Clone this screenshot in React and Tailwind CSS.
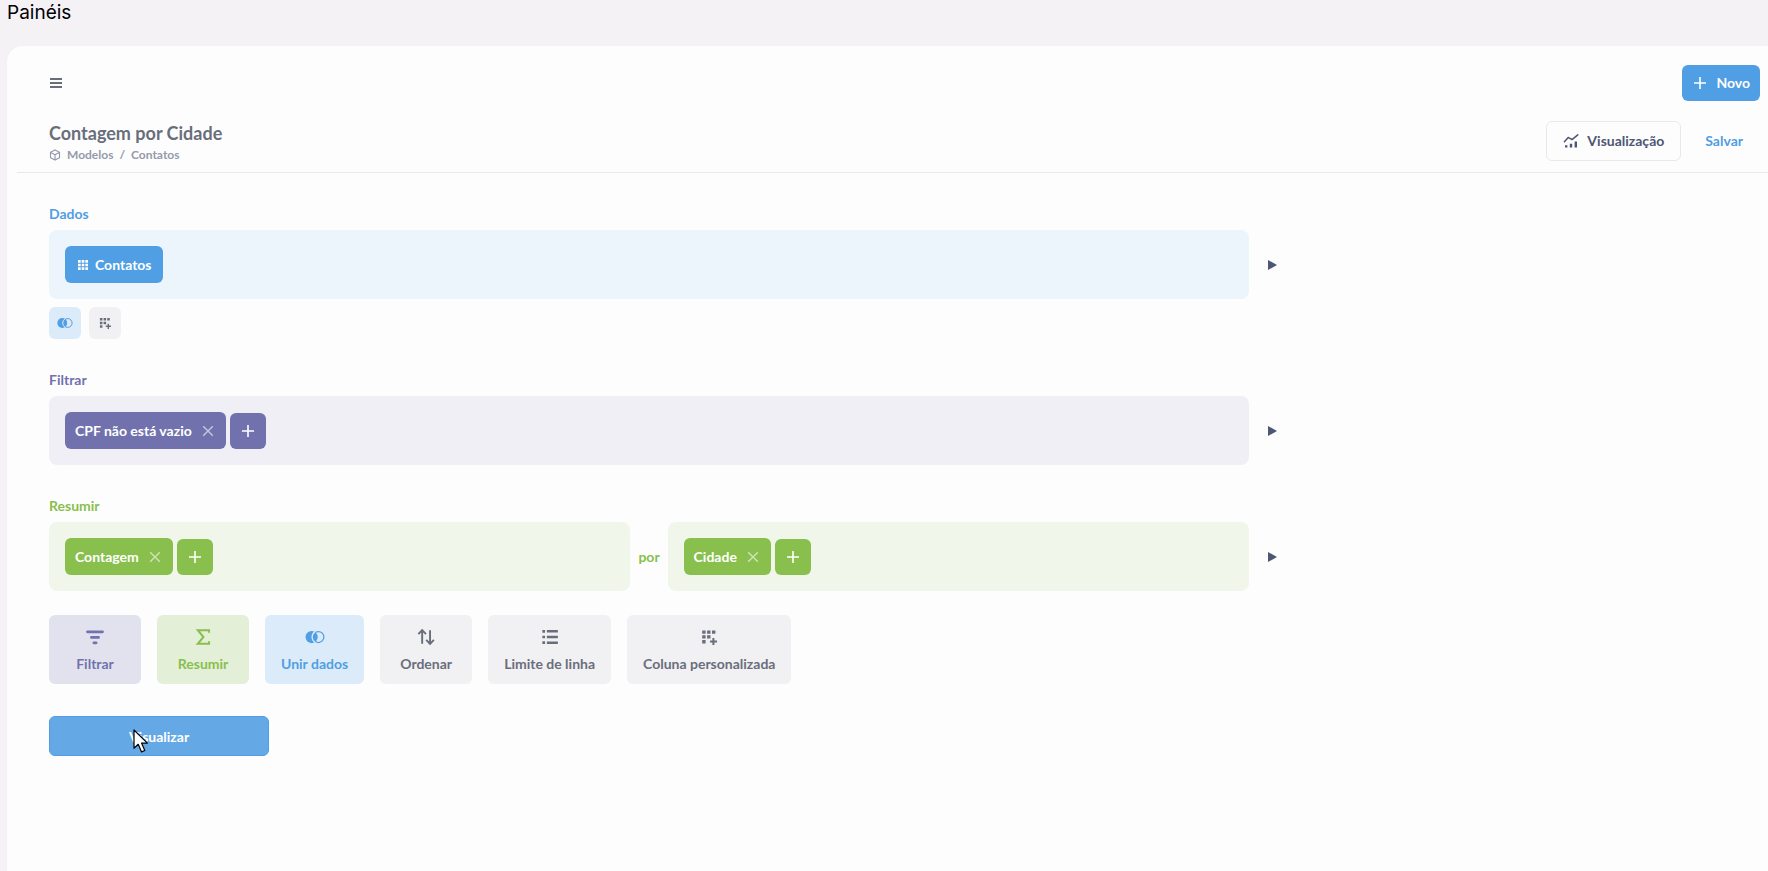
// App.jsx
import React from 'react';

function Icon({ size = 16, className = '', children }) {
  return (
    <svg
      width={size}
      height={size}
      viewBox="0 0 16 16"
      fill="currentColor"
      aria-hidden="true"
      className={`shrink-0 ${className}`}
    >
      {children}
    </svg>
  );
}

const MenuIcon = () => (
  <Icon size={16}>
    <path d="M2 3h12v2H2zM2 7h12v2H2zM2 11h12v2H2z" />
  </Icon>
);

const ModelIcon = () => (
  <Icon size={12}>
    <path
      d="M8 1.2l6 3.2v7.2l-6 3.2-6-3.2V4.4zM2.3 4.6L8 7.8l5.7-3.2M8 7.8v6.6"
      fill="none"
      stroke="currentColor"
      strokeWidth="1.5"
      strokeLinejoin="round"
    />
  </Icon>
);

const PlusIcon = ({ size = 16 }) => (
  <Icon size={size}>
    <path d="M7.2 2h1.6v5.2H14v1.6H8.8V14H7.2V8.8H2V7.2h5.2z" />
  </Icon>
);

const CloseIcon = () => (
  <Icon size={16} className="opacity-60">
    <path d="M3.2 3.2l9.6 9.6M12.8 3.2l-9.6 9.6" fill="none" stroke="currentColor" strokeWidth="1.4" />
  </Icon>
);

const InsightIcon = () => (
  <Icon size={16}>
    <path
      d="M1.4 8.8l3.8-4.4 3.8 2.2L14.8 1.8"
      fill="none"
      stroke="currentColor"
      strokeWidth="1.5"
      strokeLinejoin="round"
      strokeLinecap="round"
    />
    <path d="M2 12.2h2.4v2.4H2zM6.8 10.8h2.4v3.8H6.8zM11.6 8.6H14v6h-2.4z" />
  </Icon>
);

const TableIcon = () => (
  <Icon size={12}>
    <path d="M1.3 1.3h3.6v3.6H1.3zM6.2 1.3h3.6v3.6H6.2zM11.1 1.3h3.6v3.6h-3.6zM1.3 6.2h3.6v3.6H1.3zM6.2 6.2h3.6v3.6H6.2zM11.1 6.2h3.6v3.6h-3.6zM1.3 11.1h3.6v3.6H1.3zM6.2 11.1h3.6v3.6H6.2zM11.1 11.1h3.6v3.6h-3.6z" />
  </Icon>
);

const JoinIcon = ({ size = 16 }) => (
  <Icon size={size}>
    <circle cx="5.3" cy="8" r="4.9" />
    <circle cx="10.7" cy="8" r="4.4" fill="none" stroke="currentColor" strokeWidth="1" />
    <path d="M7.9 3.9a4.9 4.9 0 0 0 0 8.2" fill="none" stroke="#dbebf9" strokeWidth="1" />
  </Icon>
);

const ColumnIcon = ({ size = 16 }) => (
  <Icon size={size}>
    <path d="M1.2 1.4h3.4v3.4H1.2zM6.1 1.4h3.4v3.4H6.1zM11 1.4h3.4v3.4H11zM1.2 6.2h3.4v3.4H1.2zM6.1 6.2h3.4v3.4H6.1zM1.2 11h3.4v3.4H1.2z" />
    <path d="M11.4 9h2v2.4H16v2h-2.6V16h-2v-2.6H9v-2h2.4z" />
  </Icon>
);

const FilterIcon = () => (
  <Icon size={18}>
    <path
      d="M1.3 3.4h13.4M4.8 8.4h6.4M7 13.2h2"
      fill="none"
      stroke="currentColor"
      strokeWidth="2.4"
      strokeLinecap="round"
    />
  </Icon>
);

const SumIcon = () => (
  <Icon size={18}>
    <path
      d="M13.4 4.2V2H3.4l5 6-5 6h10v-2.2"
      fill="none"
      stroke="currentColor"
      strokeWidth="1.8"
    />
  </Icon>
);

const SortIcon = () => (
  <Icon size={18}>
    <path
      d="M4.6 14V2M1.2 5.4l3.4-3.6L8 5.4M11.6 2v12M8.2 10.6l3.4 3.6 3.4-3.6"
      fill="none"
      stroke="currentColor"
      strokeWidth="1.7"
    />
  </Icon>
);

const ListIcon = () => (
  <Icon size={18}>
    <path d="M1.2 1.8h2.4v2.4H1.2zM5.2 1.8H15v2.2H5.2zM1.2 6.8h2.4v2.4H1.2zM5.2 6.9H15v2.2H5.2zM1.2 11.8h2.4v2.4H1.2zM5.2 12H15v2.2H5.2z" />
  </Icon>
);

const PlayIcon = () => (
  <Icon size={10}>
    <path d="M1.6 0v16L16 8z" />
  </Icon>
);

function Chip({ label, color }) {
  return (
    <div className={`flex h-[37px] items-center gap-2 rounded-md px-[10px] text-white ${color}`}>
      <button type="button">{label}</button>
      <button type="button" aria-label={`Remover ${label}`}>
        <CloseIcon />
      </button>
    </div>
  );
}

function AddButton({ label, color }) {
  return (
    <button
      type="button"
      aria-label={label}
      className={`flex size-9 items-center justify-center rounded-md text-white ${color}`}
    >
      <PlusIcon />
    </button>
  );
}

function Step({ title, color, children, footer }) {
  return (
    <section>
      <h2 className={`mb-2 text-sm leading-[17px] font-bold ${color}`}>{title}</h2>
      <div className="flex items-center">
        <div className="flex max-w-[1200px] flex-1 items-center">{children}</div>
        <button type="button" aria-label={`Prévia de ${title}`} className="ml-[18px] text-[#4c5773]">
          <PlayIcon />
        </button>
      </div>
      {footer}
    </section>
  );
}

const actions = [
  { label: 'Filtrar', icon: FilterIcon, style: 'bg-[#e2e2ee] text-[#7172ad]' },
  { label: 'Resumir', icon: SumIcon, style: 'bg-[#e4efd8] text-[#88bf4d]' },
  { label: 'Unir dados', icon: () => <JoinIcon size={20} />, style: 'bg-[#dbebf9] text-[#509ee3]' },
  { label: 'Ordenar', icon: SortIcon, style: 'bg-[#f1f0f3] text-[#696e7b]' },
  { label: 'Limite de linha', icon: ListIcon, style: 'bg-[#f1f0f3] text-[#696e7b]' },
  {
    label: 'Coluna personalizada',
    icon: () => <ColumnIcon size={16} />,
    style: 'bg-[#f1f0f3] text-[#696e7b]',
  },
];

export default function App() {
  return (
    <div className="flex min-h-screen flex-col bg-[#f4f2f5] pl-[7px] font-['Lato',sans-serif] text-sm leading-[17px] font-bold">
      <h1 className="h-[46px] font-['Inter',sans-serif] text-[19px] leading-[26px] font-normal text-black">
        Painéis
      </h1>

      <div className="flex-1 rounded-tl-2xl bg-[#fefdfe]">
        {/* Top bar */}
        <div className="flex items-center justify-between pt-[19px] pr-2 pl-[41px]">
          <button type="button" aria-label="Abrir menu" className="text-[#696e7b]">
            <MenuIcon />
          </button>
          <button
            type="button"
            className="flex h-9 items-center gap-2 rounded-md bg-[#509ee3] px-[10px] leading-4 text-white"
          >
            <PlusIcon />
            Novo
          </button>
        </div>

        {/* Question header */}
        <header className="ml-[10px] flex items-center justify-between border-b border-[#e9e8ed] pt-[18px] pr-[25px] pb-[9px] pl-8">
          <div>
            <h2 className="text-lg leading-7 text-[#696e7b]">Contagem por Cidade</h2>
            <nav aria-label="Caminho" className="flex items-center text-xs leading-4 text-[#949aab]">
              <ModelIcon />
              <a href="#modelos" className="ml-[6px]">
                Modelos
              </a>
              <span className="mx-[6px]">/</span>
              <a href="#contatos">Contatos</a>
            </nav>
          </div>
          <div className="flex items-center gap-6 leading-4">
            <button
              type="button"
              className="flex h-10 items-center gap-2 rounded-md border border-[#e9e8ed] px-4 text-[#4c5773]"
            >
              <InsightIcon />
              Visualização
            </button>
            <button type="button" className="text-[#509ee3]">
              Salvar
            </button>
          </div>
        </header>

        {/* Notebook */}
        <main className="flex flex-col gap-8 px-[42px] pt-8 pb-8">
          <Step
            title="Dados"
            color="text-[#509ee3]"
            footer={
              <div className="mt-2 flex gap-2">
                <button
                  type="button"
                  aria-label="Unir dados"
                  className="flex size-8 items-center justify-center rounded-md bg-[#dbebf9] text-[#509ee3]"
                >
                  <JoinIcon />
                </button>
                <button
                  type="button"
                  aria-label="Coluna personalizada"
                  className="flex size-8 items-center justify-center rounded-md bg-[#f1f0f3] text-[#696e7b]"
                >
                  <ColumnIcon size={12} />
                </button>
              </div>
            }
          >
            <div className="flex flex-1 rounded-lg bg-[#ecf4fc] p-4">
              <button
                type="button"
                className="flex h-[37px] items-center gap-[6px] rounded-md bg-[#509ee3] pr-[11px] pl-3 text-white"
              >
                <TableIcon />
                Contatos
              </button>
            </div>
          </Step>

          <Step title="Filtrar" color="text-[#7172ad]">
            <div className="flex flex-1 items-end gap-1 rounded-lg bg-[#f1eff6] p-4">
              <Chip label="CPF não está vazio" color="bg-[#7172ad]" />
              <AddButton label="Adicionar filtro" color="bg-[#7172ad]" />
            </div>
          </Step>

          <div>
            <Step title="Resumir" color="text-[#88bf4d]">
              <div className="flex flex-1 items-end gap-1 rounded-lg bg-[#f1f6eb] p-4">
                <Chip label="Contagem" color="bg-[#88bf4d]" />
                <AddButton label="Adicionar métrica" color="bg-[#88bf4d]" />
              </div>
              <span className="mx-2 text-[#88bf4d]">por</span>
              <div className="flex flex-1 items-end gap-1 rounded-lg bg-[#f1f6eb] p-4">
                <Chip label="Cidade" color="bg-[#88bf4d]" />
                <AddButton label="Adicionar agrupamento" color="bg-[#88bf4d]" />
              </div>
            </Step>

            <div className="mt-6 flex flex-wrap gap-4">
              {actions.map((action) => (
                <button
                  key={action.label}
                  type="button"
                  className={`flex h-[69px] min-w-[92px] flex-col items-center justify-center gap-2 rounded-md px-4 ${action.style}`}
                >
                  <span className="flex h-5 items-center">
                    <action.icon />
                  </span>
                  {action.label}
                </button>
              ))}
            </div>
          </div>

          <div className="relative w-[220px]">
            <button
              type="button"
              className="h-10 w-full rounded-md border border-[#509ee3] bg-[#64a8e6] text-white"
            >
              Visualizar
            </button>
            {/* Mouse pointer */}
            <svg
              width="17"
              height="26"
              viewBox="0 0 17 26"
              aria-hidden="true"
              className="pointer-events-none absolute top-[13px] left-[84px]"
            >
              <path
                d="M1 1v18.2l4.2-3.9 3.4 7.6 3.2-1.4-3.3-7.4h5.9z"
                fill="white"
                stroke="black"
                strokeWidth="1.2"
                strokeLinejoin="round"
              />
            </svg>
          </div>
        </main>
      </div>
    </div>
  );
}
